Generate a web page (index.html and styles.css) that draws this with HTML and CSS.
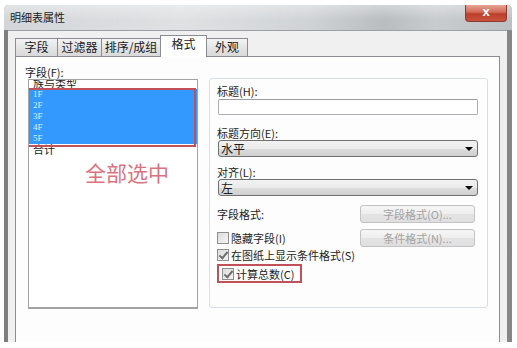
FILE: index.html
```html
<!DOCTYPE html>
<html lang="zh">
<head>
    <meta charset="UTF-8">
    <title>明细表属性</title>
    <link rel="stylesheet" href="styles.css">
</head>
<body>
    <div class="window">
        <div class="titlebar">
            <span class="title">明细表属性</span>
            <span class="close">x</span>
        </div>
        <div class="client">
            <div class="tabs">
                <div class="tab w1">字段</div>
                <div class="tab w2">过滤器</div>
                <div class="tab w3">排序/成组</div>
                <div class="tab active">格式</div>
                <div class="tab w5">外观</div>
            </div>
            <div class="panel">
                <div class="fields">
                    <div class="label">字段(F):</div>
                    <div class="listbox">
                        <div class="rows">
                            <div class="row">族与类型</div>
                            <div class="row sel">1F</div>
                            <div class="row sel">2F</div>
                            <div class="row sel">3F</div>
                            <div class="row sel">4F</div>
                            <div class="row sel">5F</div>
                            <div class="row">合计</div>
                        </div>
                        <div class="note">全部选中</div>
                        <div class="mark"></div>
                    </div>
                </div>
                <div class="group">
                    <div class="label">标题(H):</div>
                    <div class="textbox"></div>
                    <div class="label gap-l">标题方向(E):</div>
                    <div class="combo"><span>水平</span><i class="arrow"></i></div>
                    <div class="label gap-m">对齐(L):</div>
                    <div class="combo"><span>左</span><i class="arrow"></i></div>
                    <div class="line first">
                        <span>字段格式:</span>
                        <div class="btn">字段格式(O)...</div>
                    </div>
                    <div class="line second">
                        <span class="check"><i class="box"></i>隐藏字段(I)</span>
                        <div class="btn">条件格式(N)...</div>
                    </div>
                    <div class="line third">
                        <span class="check"><i class="box on"></i>在图纸上显示条件格式(S)</span>
                    </div>
                    <div class="line fourth">
                        <span class="check boxed"><i class="box on"></i>计算总数(C)</span>
                    </div>
                </div>
            </div>
        </div>
    </div>
</body>
</html>
```

FILE: styles.css
```css
* {
    box-sizing: border-box;
}
body {
    margin: 0;
    background-color: #ffffff;
    font-family: "Noto Sans CJK SC", "Liberation Sans", sans-serif;
    font-size: 11px;
    color: #1b1b1b;
}
.window {
    margin: 5px 0 0 4px;
    width: 508px;
    height: 337px;
    display: flex;
    flex-direction: column;
    border-radius: 5px 5px 0 0;
    background: linear-gradient(90deg, #7e7e7e, #a2a2a2 50%, #868686);
    overflow: hidden;
}
.titlebar {
    height: 25px;
    display: flex;
    justify-content: space-between;
    background:
        linear-gradient(180deg, rgba(255, 255, 255, 0.35), rgba(255, 255, 255, 0) 60%),
        linear-gradient(90deg, #d3d6d9, #dfe1e3 35%, #d0d3d6 60%, #b9bdc0 75%, #c9cccf 85%, #bcc0c3);
}
.title {
    padding: 5px 0 0 6px;
    line-height: 14px;
    font-size: 11px;
}
.close {
    width: 42px;
    height: 17px;
    margin-right: 5px;
    border: 1px solid #8c3b31;
    border-top: none;
    border-radius: 0 0 4px 4px;
    background: linear-gradient(180deg, #e7a394, #d26a58 45%, #bb3f2b 55%, #c9533d);
    color: #ffffff;
    font-family: "Liberation Sans", sans-serif;
    font-weight: bold;
    font-size: 13px;
    line-height: 14px;
    text-align: center;
}
.client {
    flex: 1;
    margin: 0 5px 0 4px;
    border-top: 1px solid #9aa0a6;
    background-color: #f0f0f0;
    padding: 0 7px 0 7px;
    display: flex;
    flex-direction: column;
}
.tabs {
    height: 26px;
    margin-bottom: -1px;
    padding-left: 0;
    display: flex;
    align-items: flex-end;
    position: relative;
    z-index: 1;
    font-size: 12px;
}
.tab {
    height: 18px;
    margin-bottom: 1px;
    border: 1px solid #898c95;
    border-bottom: none;
    border-left: none;
    background: linear-gradient(180deg, #f3f3f3, #e5e5e5 50%, #d9d9d9);
    text-align: center;
    line-height: 16px;
}
.w1 {
    width: 43px;
    border-left: 1px solid #898c95;
}
.w2 {
    width: 44px;
}
.w3 {
    width: 59px;
}
.w5 {
    width: 41px;
}
.tab.active {
    width: 47px;
    height: 22px;
    margin: 0 0 0 -1px;
    border-left: 1px solid #898c95;
    background: #ffffff;
    line-height: 16px;
}
.panel {
    flex: 1;
    border: 1px solid #898c95;
    border-bottom: none;
    background-color: #fefdfe;
    display: flex;
    align-items: flex-start;
}
.label {
    line-height: 13px;
    white-space: nowrap;
}
.fields {
    width: 182px;
    padding-top: 9px;
}
.fields .label {
    margin-left: 9px;
}
.listbox {
    position: relative;
    margin-left: 12px;
    width: 170px;
    height: 230px;
    border: 1px solid #a3a3a3;
    border-bottom-width: 2px;
    background-color: #ffffff;
    overflow: hidden;
}
.rows {
    margin-top: -2px;
}
.row {
    height: 11px;
    line-height: 11px;
    padding-left: 4px;
    overflow: hidden;
}
.row.sel {
    background-color: #3399ff;
    color: #d8f0ff;
    font-family: "Liberation Serif", serif;
    font-size: 9px;
}
.note {
    margin: 5px 0 0 56px;
    font-size: 21px;
    line-height: 24px;
    color: #d9737f;
}
.mark {
    position: absolute;
    left: -3px;
    top: 8px;
    width: 170px;
    height: 59px;
    border: 2px solid #c2505b;
}
.group {
    margin: 21px 0 0 11px;
    width: 279px;
    height: 230px;
    border: 1px solid #d5dfe5;
    border-radius: 3px;
    padding: 6px 9px 0 8px;
}
.group .label {
    margin-left: -1px;
}
.textbox {
    margin-top: 1px;
    height: 16px;
    border: 1px solid #abadb3;
    border-top-color: #9a9ca2;
    border-radius: 2px;
    background-color: #ffffff;
}
.gap-l {
    margin-top: 12px;
}
.gap-m {
    margin-top: 9px;
}
.combo {
    height: 17px;
    border: 1px solid #707070;
    border-radius: 3px;
    background: linear-gradient(180deg, #f2f2f2, #ebebeb 50%, #dddddd 51%, #cfcfcf);
    display: flex;
    align-items: center;
    justify-content: space-between;
    padding: 0 4px 0 2px;
    font-size: 12px;
    line-height: 15px;
}
.arrow {
    width: 0;
    height: 0;
    border-left: 4px solid transparent;
    border-right: 4px solid transparent;
    border-top: 4px solid #000000;
}
.line {
    display: flex;
    align-items: center;
    justify-content: space-between;
    white-space: nowrap;
}
.line.first {
    margin-top: 9px;
    height: 18px;
}
.line.second {
    margin-top: 6px;
    height: 18px;
}
.line.third {
    margin-top: 1px;
    height: 13px;
}
.line.fourth {
    margin-top: 3px;
    height: 19px;
}
.line > span:first-child {
    margin-left: -1px;
}
.btn {
    width: 115px;
    height: 18px;
    margin-right: 3px;
    border: 1px solid #c3c3c3;
    border-radius: 3px;
    background: linear-gradient(180deg, #f6f6f6, #eeeeee 50%, #e4e4e4 51%, #dfdfdf);
    color: #a3a3a3;
    text-align: center;
    line-height: 16px;
}
.check {
    display: flex;
    align-items: center;
    gap: 2px;
}
.box {
    width: 12px;
    height: 12px;
    border: 1px solid #8e8f8f;
    background: linear-gradient(135deg, #dcdcdc, #f4f4f4);
    position: relative;
}
.box.on::after {
    content: "";
    position: absolute;
    left: 3px;
    top: 0;
    width: 3px;
    height: 7px;
    border-right: 2px solid #6f6f6f;
    border-bottom: 2px solid #6f6f6f;
    transform: rotate(40deg);
}
.check.boxed {
    height: 19px;
    margin-left: -6px;
    padding: 0 6px 0 3px;
    border: 2px solid #c2505b;
}
```
